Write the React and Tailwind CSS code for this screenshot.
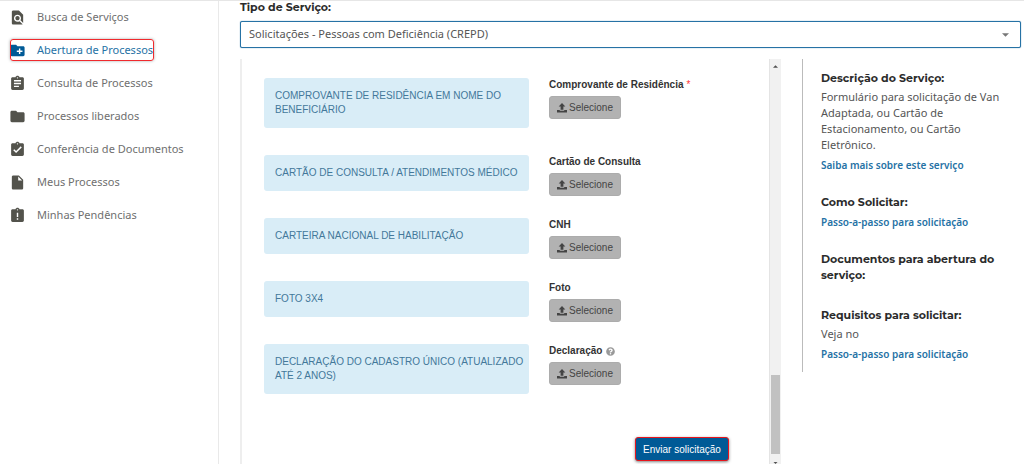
import React from "react";
import {
  MdFindInPage,
  MdCreateNewFolder,
  MdAssignment,
  MdFolder,
  MdAssignmentTurnedIn,
  MdInsertDriveFile,
  MdAssignmentLate,
} from "react-icons/md";
import { FaQuestionCircle } from "react-icons/fa";

const menu = [
  { label: "Busca de Serviços", Icon: MdFindInPage },
  { label: "Abertura de Processos", Icon: MdCreateNewFolder, active: true },
  { label: "Consulta de Processos", Icon: MdAssignment },
  { label: "Processos liberados", Icon: MdFolder },
  { label: "Conferência de Documentos", Icon: MdAssignmentTurnedIn },
  { label: "Meus Processos", Icon: MdInsertDriveFile },
  { label: "Minhas Pendências", Icon: MdAssignmentLate },
];

const documents = [
  {
    id: "residencia",
    text: "COMPROVANTE DE RESIDÊNCIA EM NOME DO BENEFICIÁRIO",
    label: "Comprovante de Residência",
    required: true,
  },
  { id: "consulta", text: "CARTÃO DE CONSULTA / ATENDIMENTOS MÉDICO", label: "Cartão de Consulta" },
  { id: "cnh", text: "CARTEIRA NACIONAL DE HABILITAÇÃO", label: "CNH" },
  { id: "foto", text: "FOTO 3X4", label: "Foto" },
  {
    id: "declaracao",
    text: "DECLARAÇÃO DO CADASTRO ÚNICO (ATUALIZADO ATÉ 2 ANOS)",
    label: "Declaração",
    help: true,
  },
];

function UploadIcon() {
  return (
    <svg viewBox="0 0 18 18" className="size-[10px] shrink-0" fill="currentColor" aria-hidden="true">
      <path d="M9 0 L15 6.5 H11.5 V12 H6.5 V6.5 H3 Z" />
      <path d="M0 12.5 H5 V14 H13 V12.5 H18 V17 H0 Z" />
    </svg>
  );
}

function MenuItem({ label, Icon, active }) {
  return (
    <li className="relative">
      <a
        href="#"
        aria-current={active ? "page" : undefined}
        className={
          active
            ? "flex h-[33px] items-center gap-[11px] pl-[9px] text-[11px] text-[#2672a5]"
            : "flex h-[33px] items-center gap-[11px] pl-[9px] text-[11px] text-[#6f6f6f]"
        }
      >
        <Icon className={active ? "size-[17px] text-[#005a96]" : "size-[17px] text-[#53534c]"} aria-hidden="true" />
        {label}
      </a>
      {active && (
        <span className="pointer-events-none absolute top-[5px] left-[10px] h-[22px] w-[144px] rounded-[3px] border border-[#f02a2e] shadow-[0_0_3px_rgba(0,0,0,0.35)]" />
      )}
    </li>
  );
}

function DocumentRow({ id, text, label, required, help }) {
  return (
    <div className="flex items-start gap-5">
      <div className="w-[265px] pb-[6px]">
        <p className="rounded-[3px] bg-[#d9edf7] py-[11px] pr-1 pl-[11px] text-[10px] leading-[14px] text-[#43789a]">
          {text}
        </p>
      </div>
      <div className="flex flex-col items-start gap-1">
        <label htmlFor={id} className="flex items-center gap-1 text-[10px] leading-[14px] font-bold text-[#333]">
          {label}
          {required && <span className="-ml-px font-normal text-[#f33]">*</span>}
          {help && <FaQuestionCircle className="size-[9px] text-[#999]" aria-hidden="true" />}
        </label>
        <button
          id={id}
          type="button"
          className="flex h-[23px] w-[72px] items-center justify-center gap-[2px] rounded-[3px] border border-[#acacac] bg-[#b2b2b2] text-[10px] text-[#444]"
        >
          <UploadIcon />
          Selecione
        </button>
      </div>
    </div>
  );
}

function Heading({ children }) {
  return <h2 className="font-['Montserrat','Inter',sans-serif] text-[11px] leading-4 font-bold text-[#2b2b2b]">{children}</h2>;
}

function HelpLink({ children }) {
  return (
    <a href="#" className="mt-1 block text-[10px] leading-4 font-semibold text-[#2672a5]">
      {children}
    </a>
  );
}

export default function App() {
  return (
    <div className="flex min-h-screen border-t border-[#e6e6e6] bg-white font-['Noto_Sans',sans-serif]">
      <nav className="w-[219px] shrink-0 border-r border-[#e9e9e9]">
        <ul>
          {menu.map((item) => (
            <MenuItem key={item.label} {...item} />
          ))}
        </ul>
      </nav>

      <main className="flex min-w-0 flex-1 flex-col pl-[21px]">
        <div className="pr-[3px]">
          <label
            htmlFor="tipo"
            className="block font-['Montserrat','Inter',sans-serif] text-[11px] leading-3 font-bold text-[#2b2b2b]"
          >
            Tipo de Serviço:
          </label>
          <div className="relative mt-2">
            <select
              id="tipo"
              className="block h-[27px] w-full appearance-none rounded-[2px] border border-[#2672a5] bg-white px-2 text-[11px] text-[#555] shadow-[0_0_1px_#2672a5]"
            >
              <option>Solicitações - Pessoas com Deficiência (CREPD)</option>
            </select>
            <svg viewBox="0 0 8 4" className="pointer-events-none absolute top-3 right-3 h-1 w-[7px]" aria-hidden="true">
              <path d="M0 0 H8 L4 4 Z" fill="#777" />
            </svg>
          </div>
        </div>

        <div className="mt-[11px] flex flex-1 items-stretch">
          <section className="flex min-w-0 flex-1 border-l-2 border-[#eee]">
            <form className="flex flex-1 flex-col gap-[21px] pt-[19px] pl-[22px] font-['Liberation_Sans',Arial,sans-serif]">
              {documents.map((doc) => (
                <DocumentRow key={doc.id} {...doc} />
              ))}
              <button
                type="button"
                className="mt-4 mr-10 h-6 w-[94px] self-end rounded-[3px] border border-[#e8141c] bg-[#005a96] text-[10px] text-white shadow-[0_1px_3px_rgba(0,0,0,0.5)]"
              >
                Enviar solicitação
              </button>
            </form>
            <div className="flex w-3 flex-col items-center border-l border-[#e4e4e4] bg-[#f1f1f1] pt-[6px]" aria-hidden="true">
              <svg viewBox="0 0 6 3" className="h-[3px] w-[5px]">
                <path d="M0 3 L3 0 L6 3 Z" fill="#505050" />
              </svg>
              <div className="flex-1" />
              <div className="h-[79px] w-[9px] bg-[#c1c1c1]" />
              <svg viewBox="0 0 6 3" className="mt-2 h-[2px] w-[5px]">
                <path d="M0 0 H6 L3 3 Z" fill="#505050" />
              </svg>
            </div>
          </section>

          <aside className="ml-[21px] w-[222px] shrink-0 self-start border-l border-[#bbb] pt-[11px] pr-5 pb-[10px] pl-[18px] text-[11px] text-[#555]">
            <Heading>Descrição do Serviço:</Heading>
            <p className="mt-[3px] leading-4">
              Formulário para solicitação de Van Adaptada, ou Cartão de Estacionamento, ou Cartão Eletrônico.
            </p>
            <HelpLink>Saiba mais sobre este serviço</HelpLink>
            <div className="mt-[21px]">
              <Heading>Como Solicitar:</Heading>
              <HelpLink>Passo-a-passo para solicitação</HelpLink>
            </div>
            <div className="mt-[21px]">
              <Heading>Documentos para abertura do serviço:</Heading>
            </div>
            <div className="mt-6">
              <Heading>Requisitos para solicitar:</Heading>
              <p className="mt-[3px] leading-4">Veja no</p>
              <HelpLink>Passo-a-passo para solicitação</HelpLink>
            </div>
          </aside>
        </div>
      </main>
    </div>
  );
}
